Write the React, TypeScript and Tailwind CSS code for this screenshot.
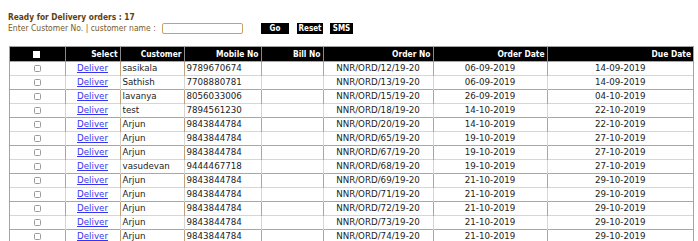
import React from "react";

const rows: [string, string, string, string, string][] = [
  ["sasikala", "9789670674", "NNR/ORD/12/19-20", "06-09-2019", "14-09-2019"],
  ["Sathish", "7708880781", "NNR/ORD/13/19-20", "06-09-2019", "14-09-2019"],
  ["lavanya", "8056033006", "NNR/ORD/15/19-20", "26-09-2019", "04-10-2019"],
  ["test", "7894561230", "NNR/ORD/18/19-20", "14-10-2019", "22-10-2019"],
  ["Arjun", "9843844784", "NNR/ORD/20/19-20", "14-10-2019", "22-10-2019"],
  ["Arjun", "9843844784", "NNR/ORD/65/19-20", "19-10-2019", "27-10-2019"],
  ["Arjun", "9843844784", "NNR/ORD/67/19-20", "19-10-2019", "27-10-2019"],
  ["vasudevan", "9444467718", "NNR/ORD/68/19-20", "19-10-2019", "27-10-2019"],
  ["Arjun", "9843844784", "NNR/ORD/69/19-20", "21-10-2019", "29-10-2019"],
  ["Arjun", "9843844784", "NNR/ORD/71/19-20", "21-10-2019", "29-10-2019"],
  ["Arjun", "9843844784", "NNR/ORD/72/19-20", "21-10-2019", "29-10-2019"],
  ["Arjun", "9843844784", "NNR/ORD/73/19-20", "21-10-2019", "29-10-2019"],
  ["Arjun", "9843844784", "NNR/ORD/74/19-20", "21-10-2019", "29-10-2019"],
];

const bold = "font-['DejaVu_Sans_Condensed','DejaVu_Sans',sans-serif] font-bold";
const th = `${bold} text-[8.4px] text-white text-right pr-[2px] border-l border-[#8a8a8a] first:border-l-0 h-[14px] leading-[14px] p-0`;

export default function App() {
  return (
    <div className="w-[698px] h-[241px] overflow-hidden bg-white font-['DejaVu_Sans',sans-serif]">
      <div className="pl-[8px] pt-[11px]">
        <div className={`${bold} text-[8.3px] leading-[12px] text-[#5e4110]`}>
          Ready for Delivery orders : 17
        </div>
        <div className="flex items-center h-[12px] mt-[-1px]">
          <span className="font-['DejaVu_Sans_Condensed','DejaVu_Sans',sans-serif] text-[8.5px] text-[#7a5a28] w-[154px] whitespace-nowrap">
            Enter Customer No. | customer name :
          </span>
          <span className="ml-[0px] w-[81px] h-[11px] border border-[#c9a068] rounded-[2px] bg-white" />
          <span className={`${bold} ml-[18px] w-[28px] h-[11px] bg-black text-white text-[8px] leading-[11px] text-center`}>Go</span>
          <span className={`${bold} ml-[8px] w-[26px] h-[11px] bg-black text-white text-[8px] leading-[11px] text-center`}>Reset</span>
          <span className={`${bold} ml-[7px] w-[23px] h-[11px] bg-black text-white text-[8px] leading-[11px] text-center`}>SMS</span>
        </div>
      </div>
      <div className="ml-[9px] mt-[12px] w-[685px] border border-[#a3a3a3]">
        <table className="w-full table-fixed border-collapse">
          <colgroup>
            <col className="w-[55px]" />
            <col className="w-[55px]" />
            <col className="w-[64px]" />
            <col className="w-[77px]" />
            <col className="w-[62px]" />
            <col className="w-[110px]" />
            <col className="w-[114px]" />
            <col className="w-[146px]" />
          </colgroup>
          <thead>
            <tr className="bg-black">
              <th className={`${th} !text-center`}>
                <span className="inline-block w-[7px] h-[7px] bg-white align-middle" />
              </th>
              <th className={th}>Select</th>
              <th className={th}>Customer</th>
              <th className={th}>Mobile No</th>
              <th className={th}>Bill No</th>
              <th className={th}>Order No</th>
              <th className={th}>Order Date</th>
              <th className={th}>Due Date</th>
            </tr>
          </thead>
          <tbody className="text-[8.7px] text-[#222]">
            {rows.map((r, i) => {
              const bc = i % 2 === 0 ? "border-[#c4a07c]" : "border-[#d6d6d6]";
              const td = `h-[14px] leading-[13px] p-0 border-t border-l first:border-l-0 ${bc} whitespace-nowrap`;
              return (
                <tr key={i}>
                  <td className={`${td} text-center`}>
                    <span className="inline-block w-[7px] h-[7px] border border-[#9a9a9a] rounded-[1.5px] align-middle" />
                  </td>
                  <td className={`${td} text-center`}>
                    <a href="#" className="text-[#3535f0] underline">Deliver</a>
                  </td>
                  <td className={`${td} pl-[2px]`}>{r[0]}</td>
                  <td className={`${td} pl-[2px]`}>{r[1]}</td>
                  <td className={td}></td>
                  <td className={`${td} text-center`}>{r[2]}</td>
                  <td className={`${td} text-center`}>{r[3]}</td>
                  <td className={`${td} text-center`}>{r[4]}</td>
                </tr>
              );
            })}
          </tbody>
        </table>
      </div>
    </div>
  );
}
